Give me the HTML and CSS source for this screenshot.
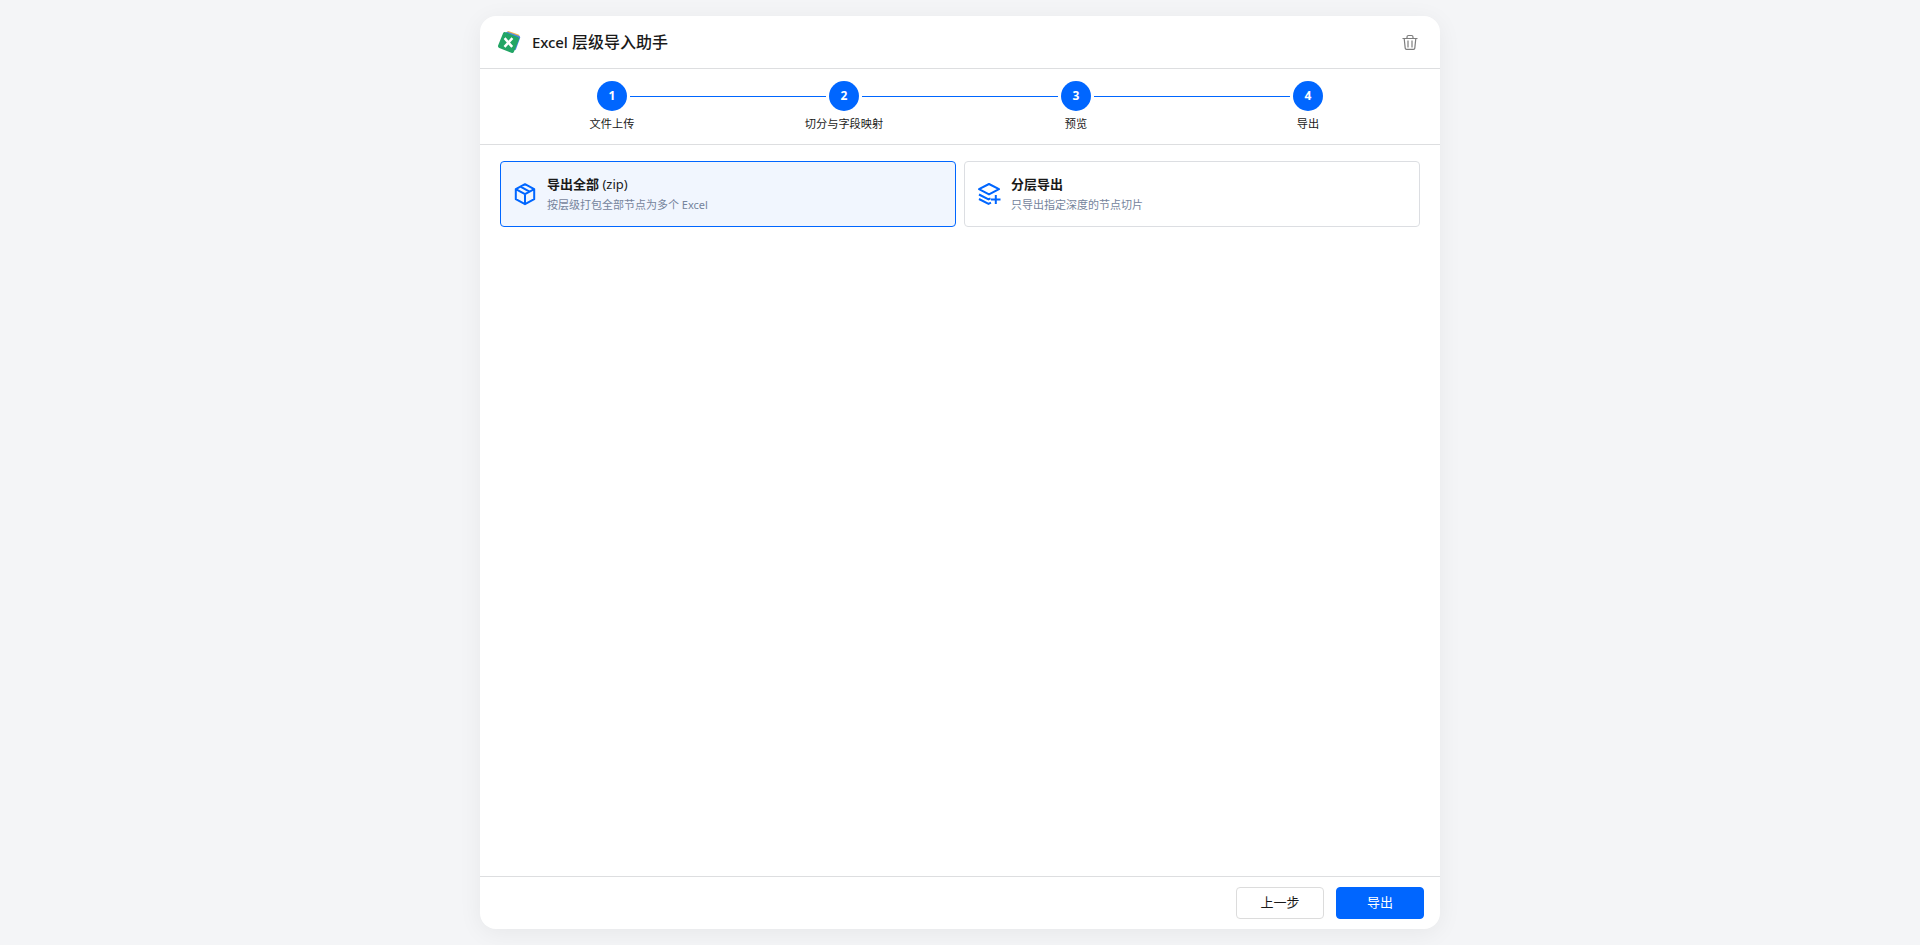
FILE: index.html
```html
<!DOCTYPE html>
<html lang="zh">
<head>
<meta charset="utf-8">
<title>Excel 层级导入助手</title>
<link rel="stylesheet" href="styles.css">
</head>
<body>
<div class="dialog">
  <header class="head">
    <div class="brand">
      <svg class="logo" width="26" height="26" viewBox="0 0 26 26">
        <rect x="8" y="3.5" width="13" height="13" rx="1.5" transform="rotate(20 14.5 10)" fill="#eeb04e"/>
        <rect x="6.5" y="4.5" width="15" height="15" rx="1.5" transform="rotate(20 14 12)" fill="#4a86dc"/>
        <rect x="3" y="5" width="17" height="17" rx="2" transform="rotate(22 11.5 13.5)" fill="#22a565"/>
        <path d="M7.6 9.2l7.6 8.6M15.4 9.2l-7.9 8.6" stroke="#fff" stroke-width="2.5" fill="none"/>
      </svg>
      <h1 class="title"><span class="latin">Excel</span> 层级导入助手</h1>
    </div>
    <svg class="trash" width="18" height="18" viewBox="0 0 18 18" fill="none" stroke="#7d7d7d" stroke-width="1.2">
      <path d="M1.5 5.5h15M6 5.5V4a1.5 1.5 0 0 1 1.5-1.5h3A1.5 1.5 0 0 1 12 4v1.5M3.2 5.5l1 9.6a1.3 1.3 0 0 0 1.3 1.2h7a1.3 1.3 0 0 0 1.3-1.2l1-9.6M7 7.5v7M11 7.5v7"/>
    </svg>
  </header>
  <nav class="steps">
    <div class="step"><span class="dot">1</span><span class="step-label">文件上传</span></div>
    <div class="step"><span class="dot">2</span><span class="step-label">切分与字段映射</span></div>
    <div class="step"><span class="dot">3</span><span class="step-label">预览</span></div>
    <div class="step"><span class="dot">4</span><span class="step-label">导出</span></div>
  </nav>
  <main class="body">
    <div class="option option-on">
      <svg class="opt-icon" width="24" height="24" viewBox="0 0 24 24" fill="none" stroke="#0066ff" stroke-width="2" stroke-linejoin="round">
        <path d="M13 2.2l9.2 5v10l-9.2 5-9.2-5v-10zM3.8 7.2l9.2 5 9.2-5M13 12.2V22M8.5 4.7l9 5"/>
      </svg>
      <div class="opt-text">
        <div class="opt-title"><b>导出全部</b> (zip)</div>
        <div class="opt-sub">按层级打包全部节点为多个 Excel</div>
      </div>
    </div>
    <div class="option">
      <svg class="opt-icon" width="24" height="24" viewBox="0 0 24 24" fill="none" stroke="#0066ff" stroke-width="2" stroke-linejoin="round">
        <path d="M13 2l10 5.2L13 12.4 3 7.200zM3 12.500l9.500 4.900 2-1M3 17l9.500 4.900 2.500-1.200M15 17.500h9.500M19.800 13v9"/>
      </svg>
      <div class="opt-text">
        <div class="opt-title"><b>分层导出</b></div>
        <div class="opt-sub">只导出指定深度的节点切片</div>
      </div>
    </div>
  </main>
  <footer class="foot">
    <button class="btn">上一步</button>
    <button class="btn btn-primary">导出</button>
  </footer>
</div>
</body>
</html>
```

FILE: styles.css
```css
* { box-sizing: border-box; }
html, body { height: 100%; }
body {
  margin: 0;
  background: #f4f5f7;
  font-family: "Noto Sans", "Noto Sans CJK SC", sans-serif;
  color: #1a1a1a;
  padding: 16px 0;
  display: flex;
  justify-content: center;
}
.dialog {
  width: 960px;
  height: 913px;
  background: #fff;
  border-radius: 16px;
  box-shadow: 0 4px 24px rgba(0, 0, 0, 0.06);
  display: flex;
  flex-direction: column;
  overflow: hidden;
}
.head {
  height: 53px;
  flex: none;
  border-bottom: 1px solid #dddee0;
  display: flex;
  align-items: center;
  justify-content: space-between;
  padding: 0 21px 0 17px;
}
.brand { display: flex; align-items: center; gap: 9px; }
.logo { display: block; }
.title { margin: 0; font-size: 16px; font-weight: 500; line-height: 24px; }
.latin { font-size: 15px; letter-spacing: -0.1px; }
.trash { display: block; }
.steps {
  height: 76px;
  flex: none;
  border-bottom: 1px solid #dddee0;
  padding: 12px 16px 0;
  display: grid;
  grid-template-columns: repeat(4, 1fr);
}
.step {
  position: relative;
  display: flex;
  flex-direction: column;
  align-items: center;
}
.step:not(:last-child)::after {
  content: "";
  position: absolute;
  left: calc(50% + 18px);
  width: 196px;
  top: 15px;
  height: 1px;
  background: #0066ff;
}
.dot {
  width: 30px;
  height: 30px;
  border-radius: 50%;
  background: #0066ff;
  color: #fff;
  font-size: 12px;
  font-weight: 700;
  line-height: 30px;
  text-align: center;
}
.step-label { margin-top: 4px; font-size: 11.2px; line-height: 18px; }
.body {
  flex: 1;
  padding: 16px 20px;
  display: grid;
  grid-template-columns: 1fr 1fr;
  gap: 8px;
  align-content: start;
}
.option {
  height: 66px;
  border: 1px solid #dcdee2;
  border-radius: 4px;
  padding: 0 11px;
  display: flex;
  align-items: center;
  gap: 11px;
  background: #fff;
}
.option-on { border-color: #0066ff; background: #f1f6fe; }
.opt-icon { display: block; flex: none; overflow: visible; }
.opt-title { font-size: 13px; line-height: 20px; }
.opt-title b { font-weight: 700; }
.opt-sub { font-size: 11px; line-height: 18px; color: #75849c; margin-top: 2px; }
.foot {
  height: 53px;
  flex: none;
  border-top: 1px solid #dddee0;
  display: flex;
  align-items: flex-start;
  justify-content: flex-end;
  gap: 12px;
  padding: 10px 16px 0;
}
.btn {
  width: 88px;
  height: 32px;
  border: 1px solid #dcdcdc;
  border-radius: 4px;
  background: #fff;
  color: #1a1a1a;
  font: 400 13px/20px "Noto Sans", "Noto Sans CJK SC", sans-serif;
  padding: 0 0 2px;
}
.btn-primary { background: #0066ff; border-color: #0066ff; color: #fff; }
```
